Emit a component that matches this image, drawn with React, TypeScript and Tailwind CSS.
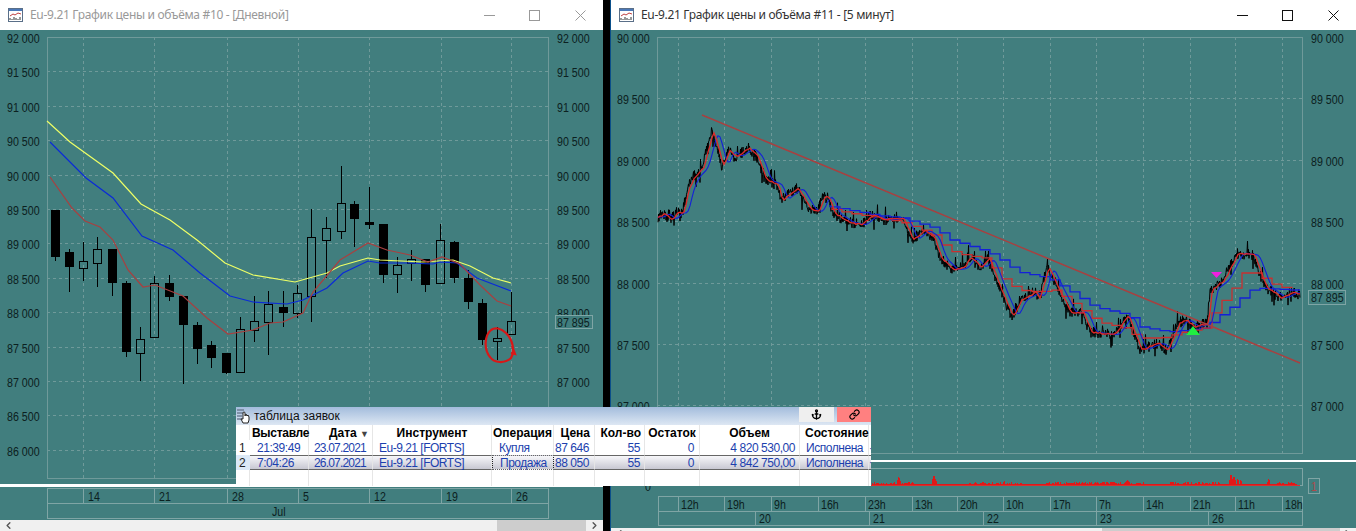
import React from 'react';
import { Anchor, ChevronLeft, ChevronRight, Link } from 'lucide-react';

type Pt = [number, number];
// x, high, body top, body bottom, low, filled
type Candle = [number, number, number, number, number, boolean];

const candles: Candle[] = [
  [55, 210, 210, 257, 261, true], [69, 249, 252, 267, 292, true], [83, 242, 261, 268, 281, false],
  [97, 237, 249, 263, 287, false], [112, 249, 249, 283, 296, true], [126, 281, 283, 352, 357, true],
  [140, 327, 339, 353, 381, false], [154, 276, 283, 337, 337, false], [169, 275, 283, 297, 301, true],
  [183, 296, 296, 325, 384, true], [197, 322, 325, 349, 364, true], [211, 341, 345, 358, 368, true],
  [226, 353, 353, 373, 374, true], [240, 317, 329, 372, 372, false], [254, 296, 321, 330, 342, false],
  [268, 291, 304, 322, 355, false], [283, 291, 307, 313, 327, true], [297, 285, 293, 313, 318, false],
  [311, 209, 237, 296, 322, false], [326, 217, 228, 240, 278, false], [341, 166, 203, 231, 239, false],
  [354, 201, 204, 219, 247, true], [369, 187, 222, 225, 229, true], [383, 224, 224, 275, 283, true],
  [397, 257, 265, 274, 293, false], [411, 250, 259, 263, 281, false], [425, 259, 259, 285, 292, true],
  [440, 224, 240, 283, 283, false], [454, 241, 242, 278, 283, true], [468, 270, 278, 302, 309, true],
  [482, 299, 303, 340, 345, true], [497, 327, 338, 341, 360, false], [511, 292, 321, 334, 334, false],
];

const yellowLine: Pt[] = [[47, 121], [70, 142], [113, 173], [141, 204], [170, 220], [197, 240], [225, 263], [253, 275], [295, 282], [327, 273], [340, 266], [368, 258], [380, 260], [423, 262], [453, 260], [470, 266], [493, 278], [511, 283]];
const blueLine: Pt[] = [[50, 142], [86, 178], [113, 198], [142, 236], [173, 250], [200, 273], [230, 296], [253, 302], [287, 304], [303, 300], [327, 288], [343, 273], [368, 261], [380, 263], [407, 263], [433, 264], [440, 262], [457, 263], [477, 278], [511, 291]];
const redLine: Pt[] = [[50, 177], [72, 208], [85, 221], [100, 227], [113, 240], [128, 270], [143, 287], [155, 285], [183, 296], [207, 318], [228, 334], [253, 330], [270, 323], [283, 322], [303, 313], [313, 292], [340, 260], [368, 243], [387, 250], [410, 255], [428, 262], [442, 257], [460, 264], [480, 285], [497, 301], [511, 306]];

const pricePath: Pt[] = [
  [658, 217], [663, 213], [670, 220], [677, 212], [682, 214], [687, 190], [693, 177], [702, 168], [712, 130], [722, 167], [728, 150], [735, 157], [748, 148], [757, 157], [765, 180], [777, 185], [781, 200], [797, 188], [810, 210], [817, 212], [823, 197], [828, 198], [833, 213], [847, 222], [860, 225], [872, 215], [883, 220], [902, 218], [912, 240], [923, 230], [933, 237], [940, 258], [952, 270], [962, 268], [970, 257], [980, 268], [988, 258], [995, 277], [1003, 297], [1012, 317], [1020, 300], [1035, 292], [1038, 300], [1047, 267], [1057, 288], [1070, 313], [1082, 312], [1090, 332], [1113, 335], [1127, 315], [1140, 350], [1157, 343], [1167, 350], [1178, 323], [1185, 320], [1193, 327], [1207, 323], [1210, 290], [1223, 280], [1237, 253], [1253, 255], [1265, 287], [1280, 298], [1293, 292], [1300, 295],
];
const slowBlue: Pt[] = [[830, 205], [857, 210], [883, 215], [910, 218], [943, 228], [960, 240], [997, 252], [1010, 260], [1027, 272], [1057, 278], [1077, 290], [1103, 307], [1137, 315], [1150, 327], [1177, 332], [1213, 328], [1227, 317], [1243, 305], [1253, 295], [1263, 288], [1300, 290]];
const slowRed: Pt[] = [[832, 207], [857, 213], [883, 217], [910, 222], [940, 233], [957, 250], [973, 255], [993, 258], [1013, 280], [1027, 290], [1047, 292], [1063, 290], [1087, 307], [1107, 322], [1133, 328], [1147, 338], [1170, 338], [1193, 332], [1217, 327], [1223, 310], [1240, 292], [1250, 273], [1263, 273], [1287, 287], [1300, 288]];

const hash = (n: number) => {
  const s = Math.sin(n * 12.9898) * 43758.5453;
  return s - Math.floor(s);
};

const interp = (pts: Pt[], x: number) => {
  if (x <= pts[0][0]) return pts[0][1];
  for (let i = 1; i < pts.length; i++) {
    if (x <= pts[i][0]) {
      const [x0, y0] = pts[i - 1];
      const [x1, y1] = pts[i];
      return y0 + ((y1 - y0) * (x - x0)) / (x1 - x0);
    }
  }
  return pts[pts.length - 1][1];
};

const toPoints = (pts: Pt[]) => pts.map(([x, y]) => `${x},${y}`).join(' ');

const priceNoise = () => {
  const out: string[] = [];
  for (let x = 658; x <= 1300; x += 0.5) {
    const y = interp(pricePath, x);
    const r = hash(x + 3.3);
    const amp = hash(x) > 0.88 ? 20 : 8;
    out.push(`${x},${(y + (r - 0.3) * amp * (Math.round(x * 2) % 2 === 0 ? 1 : -1)).toFixed(1)}`);
  }
  return out.join(' ');
};

const movingAvg = (lag: number, span: number, jitter = 0) => {
  const out: string[] = [];
  for (let x = 658; x <= 1300; x += 2) {
    let sum = 0;
    for (let i = 0; i < span; i++) sum += interp(pricePath, x - lag - i);
    out.push(`${x},${(sum / span + (hash(x + 9) - 0.5) * jitter).toFixed(1)}`);
  }
  return out.join(' ');
};

const stepLine = (pts: Pt[], stepX: number) => {
  const out: string[] = [];
  let y = pts[0][1];
  for (let x = pts[0][0]; x <= 1300; x += stepX) {
    out.push(`${x},${y}`);
    y = interp(pts, x + stepX);
    out.push(`${x},${y}`);
  }
  return out.join(' ');
};

const volumeBars = () => {
  const peaks: Record<number, number> = { 897: 5, 898: 8, 899: 7, 900: 4, 932: 6, 933: 9, 934: 9, 935: 6, 936: 4, 1003: 3, 1004: 4, 1125: 3, 1126: 4, 1127: 5, 1128: 4, 1229: 5, 1230: 10, 1231: 10, 1232: 6, 1233: 8, 1234: 8, 1235: 5, 1237: 6, 1238: 5, 1240: 5, 1241: 4, 1267: 3, 1268: 6, 1269: 5 };
  const bars: Pt[] = [];
  for (let x = 872; x <= 1296; x++) {
    const active = Math.sin(x / 17) + Math.sin(x / 41) > -0.6;
    bars.push([x, peaks[x] ?? (active ? 1 + Math.floor(hash(x) * 2.6) : 1)]);
  }
  return bars;
};

const Label = ({ x, y, children, color = '#0c2020' }: { x: number; y: number; children: React.ReactNode; color?: string }) => (
  <text transform={`translate(${x} ${y}) scale(0.82 1)`} fontSize={13} fill={color} className="font-['Liberation_Sans',sans-serif]">
    {children}
  </text>
);

const WindowIcon = () => (
  <svg width="15" height="14" viewBox="0 0 15 14" className="shrink-0">
    <rect x="0.5" y="0.5" width="14" height="13" fill="#fff" stroke="#5a6f88" />
    <rect x="1" y="1" width="13" height="2" fill="#4a78b8" />
    <path d="M2 8l3-2 2 1 3-2 3 1" fill="none" stroke="#c04040" />
    <path d="M2 12v-2M4 12v-1M6 12V9M8 12v-2M10 12v-1M12 12V9" stroke="#333" />
  </svg>
);

const TitleBar = ({ title, active }: { title: string; active: boolean }) => {
  const stroke = active ? '#111' : '#999';
  return (
    <div className="h-[30px] shrink-0 bg-white flex items-center">
      <div className="flex-1 flex items-center gap-[7px] pl-[8px]">
        <WindowIcon />
        <span className={`font-['Noto_Sans',sans-serif] text-[12px] tracking-[-0.32px] ${active ? 'text-[#333]' : 'text-[#999]'}`}>{title}</span>
      </div>
      <div className="flex">
        <div className="w-[45px] h-[30px] flex items-center justify-center">
          <svg width="11" height="11"><path d="M0 5.5h11" stroke={stroke} /></svg>
        </div>
        <div className="w-[45px] h-[30px] flex items-center justify-center">
          <svg width="11" height="11"><rect x="0.5" y="0.5" width="10" height="10" fill="none" stroke={stroke} /></svg>
        </div>
        <div className="w-[46px] h-[30px] flex items-center justify-center">
          <svg width="11" height="11"><path d="M0.5 0.5l10 10M10.5 0.5l-10 10" stroke={stroke} /></svg>
        </div>
      </div>
    </div>
  );
};

const ScrollBar = ({ thumb }: { thumb: string }) => (
  <div className="h-[11px] shrink-0 bg-[#f0f0f0] flex items-center">
    <div className="w-[17px] flex justify-center">
      <ChevronLeft size={11} strokeWidth={3} className="text-[#555]" />
    </div>
    <div className="flex-1 h-full">
      <div className={`h-full bg-[#cdcdcd] ${thumb}`} />
    </div>
    <div className="w-[17px] flex justify-center">
      <ChevronRight size={11} strokeWidth={3} className="text-[#555]" />
    </div>
  </div>
);

const leftPrices = ['92 000', '91 500', '91 000', '90 500', '90 000', '89 500', '89 000', '88 500', '88 000', '87 500', '87 000', '86 500', '86 000'];
const leftWeeks = [83, 154, 227, 298, 369, 441, 511];
const leftWeekLabels = ['14', '21', '28', '5', '12', '19', '26'];

const LeftChart = () => (
  <svg viewBox="0 30 603 454" className="w-[603px] h-[454px] block shrink-0">
    <rect x="47.5" y="37.5" width="501" height="441" fill="none" stroke="#6f9a9a" />
    {leftPrices.map((p, i) => {
      const y = Math.round(37 + i * 34.4) + 0.5;
      return (
        <g key={p}>
          <line x1="47" x2="548" y1={y} y2={y} stroke="#6f9a9a" strokeDasharray="3 3" />
          <Label x={7} y={y + 5}>{p}</Label>
          {/* the last two right-hand labels sit under the orders table */}
          {i < 11 && <Label x={557} y={y + 5}>{p}</Label>}
        </g>
      );
    })}
    {leftWeeks.map((x) => (
      <line key={x} x1={x + 0.5} x2={x + 0.5} y1="37" y2="478" stroke="#6f9a9a" strokeDasharray="3 3" />
    ))}
    <g shapeRendering="crispEdges">
      {candles.map(([x, hi, top, bot, lo, filled]) => (
        <g key={x}>
          <line x1={x + 0.5} x2={x + 0.5} y1={hi} y2={top} stroke="#000" />
          <line x1={x + 0.5} x2={x + 0.5} y1={bot} y2={lo} stroke="#000" />
          {filled ? (
            <rect x={x - 4} y={top} width="9" height={bot - top} fill="#000" />
          ) : (
            <rect x={x - 3.5} y={top + 0.5} width="8" height={bot - top} fill="none" stroke="#000" />
          )}
        </g>
      ))}
    </g>
    <polyline points={toPoints(yellowLine)} fill="none" stroke="#eeff66" strokeWidth="1.2" />
    <polyline points={toPoints(blueLine)} fill="none" stroke="#0a2ad8" strokeWidth="1.2" />
    <polyline points={toPoints(redLine)} fill="none" stroke="#a84040" strokeWidth="1.2" />
    <path d="M491 330C484 336 484 350 490 357C494 363 505 364 511 358C515 351 513 340 506 333C501 328 495 327 491 330M512 346L515 354L511 353" fill="none" stroke="#d81818" strokeWidth="2.2" />
    <rect x="555.5" y="315.5" width="37" height="13" fill="#417e7e" stroke="#7fa5a5" />
    <Label x={557} y={327}>87 895</Label>
  </svg>
);

const LeftAxis = () => (
  <svg viewBox="0 487 603 33" className="w-[603px] h-[33px] block shrink-0">
    <g fill="none" stroke="#7fa5a5">
      <rect x="47.5" y="488.5" width="501" height="15" />
      <rect x="47.5" y="503.5" width="501" height="15" />
    </g>
    {leftWeeks.map((x, i) => (
      <g key={x}>
        <line x1={x + 0.5} x2={x + 0.5} y1="488" y2="503" stroke="#7fa5a5" />
        <Label x={x + 5} y={501}>{leftWeekLabels[i]}</Label>
      </g>
    ))}
    <Label x={272} y={516}>Jul</Label>
  </svg>
);

const rightPrices = ['90 000', '89 500', '89 000', '88 500', '88 000', '87 500', '87 000'];
const rightHours = [678, 724, 771, 818, 865, 912, 957, 1003, 1050, 1096, 1143, 1190, 1235, 1282];
const rightHourLabels = ['12h', '19h', '9h', '16h', '23h', '13h', '20h', '10h', '17h', '7h', '14h', '21h', '11h', '18h'];
const rightDays: Pt[] = [[755, 20], [869, 21], [983, 22], [1096, 23], [1208, 26]];

const RightChart = () => (
  <svg viewBox="611 30 745 430" className="w-[745px] h-[430px] block shrink-0">
    <rect x="657.5" y="37.5" width="645" height="416" fill="none" stroke="#6f9a9a" />
    {rightPrices.map((p, i) => {
      const y = Math.round(37 + i * 61.4) + 0.5;
      return (
        <g key={p}>
          <line x1="657" x2="1302" y1={y} y2={y} stroke="#6f9a9a" strokeDasharray="3 3" />
          <Label x={617} y={y + 5}>{p}</Label>
          <Label x={1311} y={y + 5}>{p}</Label>
        </g>
      );
    })}
    {rightHours.map((x) => (
      <line key={x} x1={x + 0.5} x2={x + 0.5} y1="37" y2="453" stroke="#6f9a9a" strokeDasharray="3 3" />
    ))}
    <polyline points={priceNoise()} fill="none" stroke="#000" strokeWidth="1" />
    <polyline points={stepLine(slowBlue, 10)} fill="none" stroke="#1420d8" strokeWidth="1.3" />
    <polyline points={stepLine(slowRed, 10)} fill="none" stroke="#c83030" strokeWidth="1.3" />
    <polyline points={movingAvg(4, 6)} fill="none" stroke="#1420d8" strokeWidth="1.1" />
    <polyline points={movingAvg(1, 3, 1.5)} fill="none" stroke="#e02828" strokeWidth="1.3" />
    <line x1="702" y1="115" x2="1300" y2="363" stroke="#a84040" strokeWidth="1.5" />
    <polygon points="1211,272 1222,272 1216.5,278" fill="#f020e0" />
    <polygon points="1186,335 1200,335 1193,326" fill="#20f040" />
    <rect x="1308.5" y="290.5" width="37" height="14" fill="#417e7e" stroke="#7fa5a5" />
    <Label x={1311} y={302}>87 895</Label>
  </svg>
);

const RightAxis = () => (
  <svg viewBox="611 462 745 66" className="w-[745px] h-[66px] block shrink-0">
    <rect x="658.5" y="468.5" width="644" height="17" fill="none" stroke="#7fa5a5" />
    {volumeBars().map(([x, h]) => (
      <rect key={x} x={x} y={485 - h} width="1" height={h} fill="#e01818" />
    ))}
    <line x1="658" x2="1300" y1="485.5" y2="485.5" stroke="#d83030" />
    <Label x={645} y={491}>0</Label>
    <rect x="1308.5" y="478.5" width="11" height="15" fill="none" stroke="#7fa5a5" />
    <Label x={1311} y={491} color="#b04a4a">1</Label>
    <g fill="none" stroke="#7fa5a5">
      <rect x="658.5" y="496.5" width="644" height="15" />
      <rect x="658.5" y="511.5" width="644" height="14" />
    </g>
    {rightHours.map((x, i) => (
      <g key={x}>
        <line x1={x + 0.5} x2={x + 0.5} y1="496" y2="511" stroke="#7fa5a5" />
        <Label x={x + 3} y={509}>{rightHourLabels[i]}</Label>
      </g>
    ))}
    {rightDays.map(([x, d]) => (
      <g key={d}>
        <line x1={x + 0.5} x2={x + 0.5} y1="511" y2="525" stroke="#7fa5a5" />
        <Label x={x + 4} y={523}>{d}</Label>
      </g>
    ))}
  </svg>
);

const headCell = "border-r border-[#e6e6e6] whitespace-nowrap font-bold text-black text-[12px] leading-[17px]";
const bodyCell = "border-r border-[#e6e6e6] whitespace-nowrap text-[#1c3fae] text-[12px]";

const orders = [
  { n: '1', time: '21:39:49', date: '23.07.2021', op: 'Купля', price: '87 646', sum: '4 820 530,00' },
  { n: '2', time: '7:04:26', date: '26.07.2021', op: 'Продажа', price: '88 050', sum: '4 842 750,00' },
];

const OrdersTable = () => (
  <div className="absolute left-[236px] top-[407px] w-[635px] h-[79px] bg-white font-['Liberation_Sans',sans-serif] overflow-hidden">
    <div className="h-[18px] flex items-center bg-linear-to-b from-[#a3bcdc] to-[#dde7f3]">
      <svg width="15" height="16" viewBox="0 0 15 16" className="shrink-0">
        <path d="M1 2h7M1 5h7M1 8h5M1 11h5" stroke="#6f7f95" strokeWidth="1.5" />
        <path d="M7 15l-2-4 2 0V5a1 1 0 012 0v3l1-2 1 2 1-1 1 2v3l-1 3z" fill="#fff" stroke="#222" />
      </svg>
      <span className="ml-[3px] text-[12px] text-[#111]">таблица заявок</span>
      <div className="ml-auto flex gap-[3px] self-start">
        <div className="w-[35px] h-[15px] bg-[#efefef] flex items-center justify-center">
          <Anchor size={11} strokeWidth={3} className="text-black" />
        </div>
        <div className="w-[34px] h-[15px] bg-[#ff8080] flex items-center justify-center">
          <Link size={11} strokeWidth={2.5} className="text-black" />
        </div>
      </div>
    </div>
    <div className="grid grid-cols-[14px_59px_64px_119px_62px_41px_50px_55px_100px_69px_2px] grid-rows-[15px_15px_15px_16px]">
      <div className={headCell} />
      <div className={`${headCell} pl-[2px] tracking-[-0.3px]`}>Выставле</div>
      <div className={`${headCell} text-right pr-[3px]`}>Дата <span className="text-[#444] text-[9px]">▼</span></div>
      <div className={`${headCell} text-center`}>Инструмент</div>
      <div className={`${headCell} text-center`}>Операция</div>
      <div className={`${headCell} text-right pr-[4px]`}>Цена</div>
      <div className={`${headCell} text-right pr-[3px]`}>Кол-во</div>
      <div className={`${headCell} text-center`}>Остаток</div>
      <div className={`${headCell} text-center`}>Объем</div>
      <div className={`${headCell} pl-[5px]`}>Состояние</div>
      <div />
      {orders.map((o, i) => {
        const sel = i === 1;
        const row = sel
          ? 'bg-linear-to-b from-[#f7f7fa] to-[#c8c8d2] border-y border-y-[#666] leading-[14px]'
          : 'leading-[17px]';
        return (
          <React.Fragment key={o.n}>
            <div className={`text-[12px] text-[#222] pl-[3px] ${sel ? 'bg-[#dce9f7] leading-[16px]' : 'leading-[17px]'}`}>{o.n}</div>
            <div className={`${bodyCell} ${row} pl-[7px] tracking-[-0.45px]`}>{o.time}</div>
            <div className={`${bodyCell} ${row} text-right pr-[6px] tracking-[-0.8px]`}>{o.date}</div>
            <div className={`${bodyCell} ${row} pl-[6px] tracking-[-0.5px]`}>Eu-9.21 [FORTS]</div>
            <div className={`${bodyCell} ${row} pl-[7px] tracking-[-0.5px] ${sel ? 'border-x border-dotted border-x-[#222]' : ''}`}>{o.op}</div>
            <div className={`${bodyCell} ${row} text-right pr-[5px] tracking-[-0.45px]`}>{o.price}</div>
            <div className={`${bodyCell} ${row} text-right pr-[4px] tracking-[-0.45px]`}>55</div>
            <div className={`${bodyCell} ${row} text-right pr-[5px] tracking-[-0.45px]`}>0</div>
            <div className={`${bodyCell} ${row} text-right pr-[4px] tracking-[-0.45px]`}>{o.sum}</div>
            <div className={`${bodyCell} ${row} pl-[6px] tracking-[-0.45px]`}>Исполнена</div>
            <div className={`${row} text-[#1c3fae] text-[10px]`}>·</div>
          </React.Fragment>
        );
      })}
      {Array.from({ length: 10 }).map((_, i) => (
        <div key={i} className="border-r border-[#e6e6e6]" />
      ))}
    </div>
  </div>
);

export default function App() {
  return (
    <div className="relative w-[1356px] h-[531px] overflow-hidden bg-black flex">
      <div className="w-[603px] h-[531px] flex flex-col bg-[#417e7e]">
        <TitleBar title="Eu-9.21 График цены и объёма #10 - [Дневной]" active={false} />
        <LeftChart />
        <div className="h-[3px] shrink-0 bg-white" />
        <LeftAxis />
        <ScrollBar thumb="ml-[480px] w-[89px]" />
      </div>
      <div className="ml-[7px] w-[746px] h-[531px] flex flex-col overflow-hidden bg-[#417e7e] border-l border-l-[#0b4f8a]">
        <TitleBar title="Eu-9.21 График цены и объёма #11 - [5 минут]" active />
        <RightChart />
        <div className="h-[2px] shrink-0 bg-white" />
        <RightAxis />
        <ScrollBar thumb="ml-[474px] w-[238px]" />
      </div>
      <OrdersTable />
    </div>
  );
}
